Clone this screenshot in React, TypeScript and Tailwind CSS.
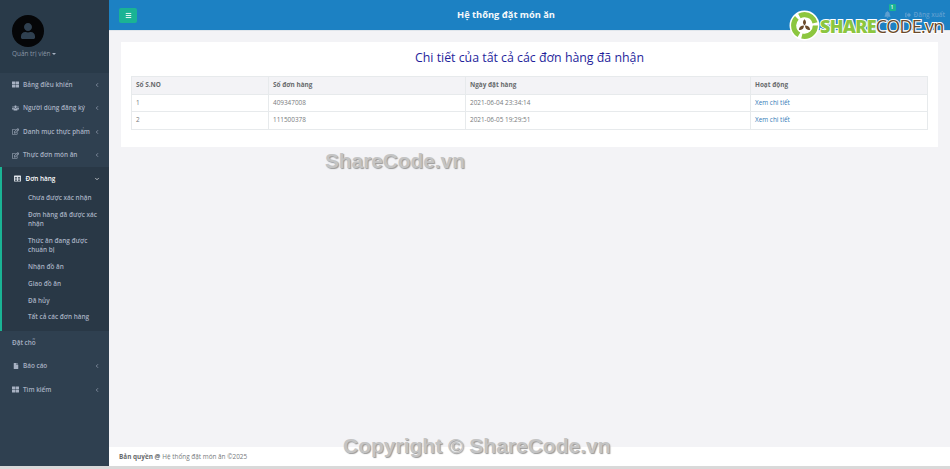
import { ReactNode } from "react";
import { ChevronDown, ChevronLeft, Menu } from "lucide-react";
import {
  FaBell,
  FaFile,
  FaRegEdit,
  FaSignOutAlt,
  FaTable,
  FaThLarge,
  FaUser,
  FaUsers,
} from "react-icons/fa";

const subItems = [
  "Chưa được xác nhận",
  "Đơn hàng đã được xác nhận",
  "Thức ăn đang được chuẩn bị",
  "Nhận đồ ăn",
  "Giao đồ ăn",
  "Đã hủy",
  "Tất cả các đơn hàng",
];

const orders = [
  { id: 1, number: "409347008", date: "2021-06-04 23:34:14" },
  { id: 2, number: "111500378", date: "2021-06-05 19:29:51" },
];

const NavItem = ({
  icon,
  label,
  arrow = true,
}: {
  icon?: ReactNode;
  label: string;
  arrow?: boolean;
}) => (
  <div className="flex h-[23.5px] items-center pl-3 pr-[9px] text-[6.4px] font-semibold text-[#a7b1c2]">
    {icon && <span className="mr-[4px] flex w-[7px] justify-center">{icon}</span>}
    <span className="flex-1 whitespace-nowrap">{label}</span>
    {arrow && <ChevronLeft size={6} strokeWidth={2.5} />}
  </div>
);

const Sidebar = () => (
  <aside className="flex w-[109px] shrink-0 flex-col bg-[#2f4050]">
    <div className="h-[73px] bg-[#293a49] pl-3 pt-[15px]">
      <div className="flex h-8 w-8 items-end justify-center overflow-hidden rounded-full bg-[#050608]">
        <FaUser size={16} className="mb-[8px] text-[#2f4050]" />
      </div>
      <div className="mt-[2px] flex items-center gap-[1px] text-[6.4px] text-[#8a97a6]">
        Quản trị viên
        <span className="mt-[1px] h-0 w-0 border-x-[2px] border-t-[2px] border-x-transparent border-t-[#a7b1c2]" />
      </div>
    </div>
    <nav>
      <NavItem icon={<FaThLarge size={7} />} label="Bảng điều khiển" />
      <NavItem icon={<FaUsers size={8} />} label="Người dùng đăng ký" />
      <NavItem icon={<FaRegEdit size={7} />} label="Danh mục thực phẩm" />
      <NavItem icon={<FaRegEdit size={7} />} label="Thực đơn món ăn" />
      <div className="h-[164px] border-l-2 border-[#1ab394] bg-[#293846]">
        <div className="flex h-[23px] items-center pl-3 pr-[9px] text-[6.4px] font-semibold text-white">
          <FaTable size={7} className="mr-[4.5px] text-[#dfe4ea]" />
          <span className="flex-1">Đơn hàng</span>
          <ChevronDown size={6} strokeWidth={2.5} />
        </div>
        <ul className="flex flex-col gap-[7.5px] pl-[26px] pr-[6px] pt-[3px] text-[6.4px] font-semibold leading-[9.3px] text-[#a7b1c2]">
          {subItems.map((item) => (
            <li key={item}>{item}</li>
          ))}
        </ul>
      </div>
      <NavItem label="Đặt chỗ" arrow={false} />
      <NavItem icon={<FaFile size={6} />} label="Báo cáo" />
      <NavItem icon={<FaThLarge size={7} />} label="Tìm kiếm" />
    </nav>
  </aside>
);

const Header = () => (
  <header className="relative flex h-[31px] shrink-0 items-center border-b border-[#e0e6ec] bg-[#1c81c3] pl-[10px]">
    <button className="flex h-[15px] w-[18px] items-center justify-center rounded-[2px] bg-[#1ab394] text-white">
      <Menu size={7} strokeWidth={3} />
    </button>
    <h1 className="absolute left-0 right-[47px] text-center text-[9.3px] font-bold text-[#f4f8fb]">
      Hệ thống đặt món ăn
    </h1>
    <div className="ml-auto flex items-center pr-[5px] text-[6.4px] font-semibold text-[#5f9fd0]">
      <span className="relative mr-[14px]">
        <FaBell size={7} />
        <span className="absolute -right-[5px] -top-[7px] flex h-[7px] w-[7px] items-center justify-center rounded-[1px] bg-[#1ab394] text-[5px] text-white">
          1
        </span>
      </span>
      <FaSignOutAlt size={6} className="mr-[3px]" />
      Đăng xuất
    </div>
  </header>
);

const OrdersTable = () => (
  <table className="w-[797px] table-fixed border-collapse text-[6.4px] text-[#777a7c]">
    <colgroup>
      <col className="w-[137px]" />
      <col className="w-[197px]" />
      <col className="w-[285px]" />
      <col />
    </colgroup>
    <thead>
      <tr className="h-[17.5px] bg-[#f3f3f6] text-left font-bold text-[#676a6c]">
        {["Số S.NO", "Số đơn hàng", "Ngày đặt hàng", "Hoạt động"].map((title) => (
          <th key={title} className="border border-[#e7eaec] px-[4px]">
            {title}
          </th>
        ))}
      </tr>
    </thead>
    <tbody>
      {orders.map((order) => (
        <tr key={order.id} className="h-[17.5px]">
          <td className="border border-[#e7eaec] px-[4px]">{order.id}</td>
          <td className="border border-[#e7eaec] px-[4px]">{order.number}</td>
          <td className="border border-[#e7eaec] px-[4px]">{order.date}</td>
          <td className="border border-[#e7eaec] px-[4px] text-[#337ab7]">Xem chi tiết</td>
        </tr>
      ))}
    </tbody>
  </table>
);

const LogoMark = () => (
  <svg width="31" height="31" viewBox="0 0 30 30" className="shrink-0">
    <circle cx="15" cy="15" r="14.5" fill="#ffffff" />
    <circle cx="15" cy="15" r="10.5" fill="none" stroke="#8cc63f" strokeWidth="5" strokeDasharray="19 3" />
    <circle cx="15" cy="15" r="7.5" fill="#ffffff" />
    <path d="M15 9c2 2 2 4 0 6-2-2-2-4 0-6zM9.500 19c.5-3 2-4 5-4 0 3-2 5-5 4zM20.500 19c-3 1-5-1-5-4 3 0 4.500 1 5 4z" fill="#6b4a2b" />
  </svg>
);

const Watermarks = () => (
  <>
    <div className="absolute left-[789px] top-[10px] flex items-center">
      <LogoMark />
      <span className="text-[18px] font-extrabold leading-none tracking-[-0.7px] text-[#8cc63f] [-webkit-text-stroke:2px_#ffffff] [paint-order:stroke_fill]">
        SHARE
        <span className="font-normal tracking-[-0.8px] text-[#6b4a2b]">CODE.vn</span>
      </span>
    </div>
    <div className="absolute left-[325px] top-[149px] text-[20.800px] font-bold leading-6 text-[#c4c4c4] [font-family:'Liberation_Sans',sans-serif] [text-shadow:1px_1px_1px_#999999]">
      ShareCode.vn
    </div>
    <div className="absolute left-[343px] top-[434px] text-[21px] font-bold leading-6 text-[#c4c4c4] [font-family:'Liberation_Sans',sans-serif] [text-shadow:1px_1px_1px_#999999]">
      Copyright © ShareCode.vn
    </div>
  </>
);

export default function App() {
  return (
    <div className="relative flex h-[469px] w-[950px] flex-col overflow-hidden bg-[#d9d9d9] font-['Open_Sans',sans-serif]">
      <div className="flex h-[466px]">
        <Sidebar />
        <div className="flex min-w-0 flex-1 flex-col bg-[#f3f3f6]">
          <Header />
          <main className="flex-1 pl-3 pr-3 pt-[11px]">
            <section className="h-[105px] bg-white px-[10px] pt-[7px]">
              <h2 className="mb-[7px] h-[20px] text-center text-[12.350px] leading-[18px] text-[#1f1f9c]">
                Chi tiết của tất cả các đơn hàng đã nhận
              </h2>
              <OrdersTable />
            </section>
          </main>
          <footer className="flex h-[19px] items-center bg-white pl-[10px] text-[6.4px] text-[#777a7c]">
            <strong className="mr-[2px] text-[#676a6c]">Bản quyền @</strong> Hệ thống đặt món ăn ©2025
          </footer>
        </div>
      </div>
      <Watermarks />
    </div>
  );
}
